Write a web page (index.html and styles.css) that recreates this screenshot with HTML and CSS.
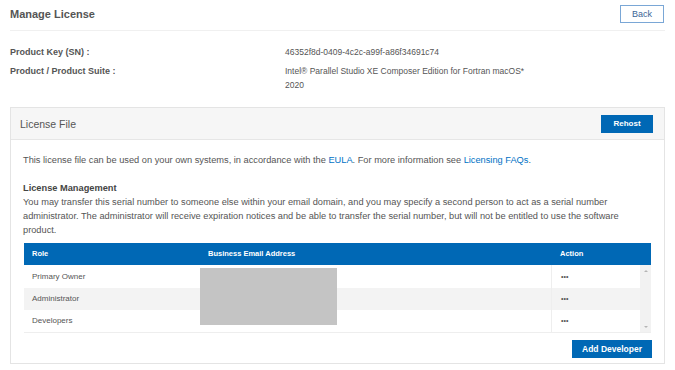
FILE: index.html
```html
<!DOCTYPE html>
<html lang="en">

<head>
    <meta charset="utf-8">
    <title>Manage License</title>
    <link rel="stylesheet" href="styles.css">
</head>

<body>
    <div class="page">
        <!--TOP BAR-->
        <div class="topbar">
            <h1>Manage License</h1>
            <button class="btn-outline">Back</button>
        </div>

        <!--PRODUCT INFO-->
        <div class="info">
            <div class="info-row">
                <span class="label">Product Key (SN) :</span>
                <span class="value">46352f8d-0409-4c2c-a99f-a86f34691c74</span>
            </div>
            <div class="info-row">
                <span class="label">Product / Product Suite :</span>
                <span class="value">Intel&reg; Parallel Studio XE Composer Edition for Fortran macOS*<br>2020</span>
            </div>
        </div>

        <!--LICENSE FILE PANEL-->
        <section class="panel">
            <div class="panel-head">
                <span>License File</span>
                <button class="btn">Rehost</button>
            </div>
            <div class="panel-body">
                <p>This license file can be used on your own systems, in accordance with the <a href="#">EULA</a>. For more information see <a href="#">Licensing FAQs</a>.</p>

                <h2>License Management</h2>
                <p class="long">You may transfer this serial number to someone else within your email domain, and you may specify a second person to act as a serial number administrator. The administrator will receive expiration notices and be able to transfer the serial number, but will not be entitled to use the software product.</p>

                <div class="table">
                    <div class="table-head">
                        <span class="col-role">Role</span>
                        <span class="col-mail">Business Email Address</span>
                        <span class="col-act">Action</span>
                        <span class="col-bar"></span>
                    </div>
                    <div class="table-body">
                        <div class="rows">
                            <div class="row">
                                <span class="col-role">Primary Owner</span>
                                <span class="col-mail"></span>
                                <span class="col-act">&bull;&bull;&bull;</span>
                            </div>
                            <div class="row">
                                <span class="col-role">Administrator</span>
                                <span class="col-mail"></span>
                                <span class="col-act">&bull;&bull;&bull;</span>
                            </div>
                            <div class="row">
                                <span class="col-role">Developers</span>
                                <span class="col-mail"></span>
                                <span class="col-act">&bull;&bull;&bull;</span>
                            </div>
                        </div>
                        <div class="scrollbar">
                            <span class="arrow-up"></span>
                            <span class="arrow-down"></span>
                        </div>
                        <div class="redact"></div>
                    </div>
                </div>

                <div class="actions">
                    <button class="btn btn-wide">Add Developer</button>
                </div>
            </div>
        </section>
    </div>
</body>

</html>
```

FILE: styles.css
```css
/*GENERELT*/
* {
    margin: 0;
    padding: 0;
    box-sizing: border-box;
}

body {
    margin: 0;
    background: #fff;
    font-family: 'Liberation Sans', Arial, sans-serif;
    font-size: 9px;
    line-height: 14px;
    color: #555;
}

a {
    color: #0071c5;
    text-decoration: none;
}

.page {
    padding: 0 10px;
    width: 675px;
}

/*TOP BAR*/
.topbar {
    display: flex;
    justify-content: space-between;
    align-items: center;
    height: 31px;
    padding-bottom: 3px;
    border-bottom: 1px solid #f0f0f0;
}

.topbar h1 {
    font-size: 11px;
    font-weight: bold;
    color: #555;
    line-height: 14px;
}

.btn-outline {
    width: 44px;
    height: 18px;
    margin-right: 1px;
    background: #fff;
    border: 1px solid #7aa7d6;
    color: #3c6596;
    font-family: 'Liberation Sans', Arial, sans-serif;
    font-size: 9px;
}

/*PRODUCT INFO*/
.info {
    padding-top: 14px;
}

.info-row {
    display: grid;
    grid-template-columns: 275px 1fr;
    margin-bottom: 5px;
}

.info-row .label {
    font-weight: bold;
    color: #555;
}

.info-row .value {
    font-size: 8.5px;
}

/*PANEL*/
.panel {
    margin-top: 15px;
    width: 655px;
    border: 1px solid #e4e4e4;
}

.panel-head {
    display: flex;
    justify-content: space-between;
    align-items: center;
    height: 32px;
    padding: 0 11px 0 9px;
    background: #f6f6f6;
    border-bottom: 1px solid #e6e6e6;
    font-size: 10.5px;
    color: #555;
}

.btn {
    height: 18px;
    width: 52px;
    background: #0068b5;
    border: none;
    color: #fff;
    font-family: 'Liberation Sans', Arial, sans-serif;
    font-size: 8px;
    font-weight: bold;
}

.btn-wide {
    width: 80px;
    font-size: 8.5px;
}

.panel-body {
    padding: 13px 12px 5px 12px;
}

.panel-body p {
    font-size: 9.25px;
}

.panel-body p.long {
    width: 622px;
}

.panel-body h2 {
    margin-top: 14px;
    font-size: 9.25px;
    font-weight: bold;
    color: #444;
}

/*TABLE*/
.table {
    margin-top: 6px;
    margin-left: 1px;
    width: 627px;
    font-size: 8px;
}

.table-head {
    display: flex;
    height: 22px;
    align-items: center;
    background: #0068b5;
    color: #fff;
    font-weight: bold;
    font-size: 7.5px;
}

.col-role {
    width: 175px;
    padding-left: 8px;
}

.col-mail {
    width: 352px;
    padding-left: 9px;
}

.col-act {
    width: 89px;
    padding-left: 9px;
}

.col-bar {
    width: 11px;
}

.table-body {
    position: relative;
    display: flex;
    border-bottom: 1px solid #eee;
}

.rows {
    width: 616px;
}

.row {
    display: flex;
    height: 22px;
    align-items: center;
    background: #fff;
}

.row:first-child {
    height: 23px;
}

.row:nth-child(2) {
    background: #f3f3f3;
}

.row span {
    height: 100%;
    display: flex;
    align-items: center;
}

.row .col-act {
    border-left: 1px solid #eee;
    font-size: 7px;
    color: #555;
}

.scrollbar {
    width: 11px;
    background: #f2f2f2;
    display: flex;
    flex-direction: column;
    justify-content: space-between;
    align-items: center;
    padding: 5px 0 4px;
}

.arrow-up {
    border-left: 2px solid transparent;
    border-right: 2px solid transparent;
    border-bottom: 2px solid #b5b5b5;
}

.arrow-down {
    border-left: 2px solid transparent;
    border-right: 2px solid transparent;
    border-top: 2px solid #b5b5b5;
}

/*SKJULT EMAIL*/
.redact {
    position: absolute;
    left: 176px;
    top: 3px;
    width: 137px;
    height: 57px;
    background: #c4c4c4;
}

.actions {
    display: flex;
    justify-content: flex-end;
    margin-top: 7px;
}
```
